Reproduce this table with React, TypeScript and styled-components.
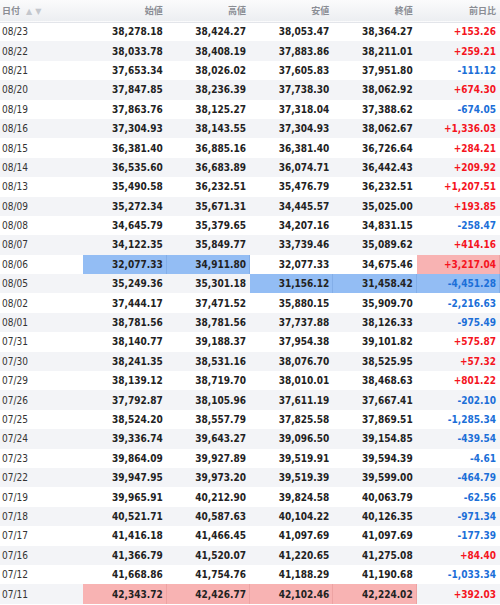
import React from "react";
import styled, { createGlobalStyle } from "styled-components";

const Global = createGlobalStyle`
  html, body { margin: 0; padding: 0; background: #fff; }
  body { font-family: "DejaVu Sans Condensed", "DejaVu Sans", "Noto Sans CJK JP", sans-serif; }
`;

type Hl = "blue" | "red" | undefined;

const Table = styled.table`
  width: 500px;
  border-collapse: collapse;
  table-layout: fixed;
`;

const HeadRow = styled.tr`
  height: 22px;
  background: linear-gradient(#fbfbfc, #eceef1);
  border-bottom: 1px solid #e3e5ea;
`;

const Th = styled.th<{ $left?: boolean }>`
  padding: ${(p) => (p.$left ? "0 0 0 2px" : "0 4px 0 0")};
  text-align: ${(p) => (p.$left ? "left" : "right")};
  font-family: "Noto Sans CJK JP", sans-serif;
  font-size: 9px;
  font-weight: 700;
  color: #8a8d94;
  white-space: nowrap;
  overflow: hidden;
`;

const Arrows = styled.span`
  margin-left: 6px;
  font-family: "DejaVu Sans", sans-serif;
  font-size: 8px;
  color: #c4c7cd;
  letter-spacing: 3px;
`;

const Row = styled.tr<{ $odd: boolean }>`
  height: 19.4px;
  background: ${(p) => (p.$odd ? "#f3f4f7" : "#ffffff")};
`;

const DateCell = styled.td`
  padding: 0 0 0 2px;
  font-size: 10px;
  color: #333;
  white-space: nowrap;
`;

const NumCell = styled.td<{ $hl: Hl; $color?: string }>`
  padding: 0 4px 0 0;
  text-align: right;
  font-size: 10px;
  font-weight: 700;
  white-space: nowrap;
  color: ${(p) => p.$color ?? "#222"};
  background: ${(p) =>
    p.$hl === "blue" ? "#93bdf4" : p.$hl === "red" ? "#f8b3b3" : "transparent"};
  box-shadow: ${(p) =>
    p.$hl === "blue"
      ? "inset -1px 0 0 #83aee8"
      : p.$hl === "red"
      ? "inset -1px 0 0 #eda3a3"
      : "none"};
`;

type Rec = [string, string, string, string, string, string];

const data: Rec[] = [
  ["08/23", "38,278.18", "38,424.27", "38,053.47", "38,364.27", "+153.26"],
  ["08/22", "38,033.78", "38,408.19", "37,883.86", "38,211.01", "+259.21"],
  ["08/21", "37,653.34", "38,026.02", "37,605.83", "37,951.80", "-111.12"],
  ["08/20", "37,847.85", "38,236.39", "37,738.30", "38,062.92", "+674.30"],
  ["08/19", "37,863.76", "38,125.27", "37,318.04", "37,388.62", "-674.05"],
  ["08/16", "37,304.93", "38,143.55", "37,304.93", "38,062.67", "+1,336.03"],
  ["08/15", "36,381.40", "36,885.16", "36,381.40", "36,726.64", "+284.21"],
  ["08/14", "36,535.60", "36,683.89", "36,074.71", "36,442.43", "+209.92"],
  ["08/13", "35,490.58", "36,232.51", "35,476.79", "36,232.51", "+1,207.51"],
  ["08/09", "35,272.34", "35,671.31", "34,445.57", "35,025.00", "+193.85"],
  ["08/08", "34,645.79", "35,379.65", "34,207.16", "34,831.15", "-258.47"],
  ["08/07", "34,122.35", "35,849.77", "33,739.46", "35,089.62", "+414.16"],
  ["08/06", "32,077.33", "34,911.80", "32,077.33", "34,675.46", "+3,217.04"],
  ["08/05", "35,249.36", "35,301.18", "31,156.12", "31,458.42", "-4,451.28"],
  ["08/02", "37,444.17", "37,471.52", "35,880.15", "35,909.70", "-2,216.63"],
  ["08/01", "38,781.56", "38,781.56", "37,737.88", "38,126.33", "-975.49"],
  ["07/31", "38,140.77", "39,188.37", "37,954.38", "39,101.82", "+575.87"],
  ["07/30", "38,241.35", "38,531.16", "38,076.70", "38,525.95", "+57.32"],
  ["07/29", "38,139.12", "38,719.70", "38,010.01", "38,468.63", "+801.22"],
  ["07/26", "37,792.87", "38,105.96", "37,611.19", "37,667.41", "-202.10"],
  ["07/25", "38,524.20", "38,557.79", "37,825.58", "37,869.51", "-1,285.34"],
  ["07/24", "39,336.74", "39,643.27", "39,096.50", "39,154.85", "-439.54"],
  ["07/23", "39,864.09", "39,927.89", "39,519.91", "39,594.39", "-4.61"],
  ["07/22", "39,947.95", "39,973.20", "39,519.39", "39,599.00", "-464.79"],
  ["07/19", "39,965.91", "40,212.90", "39,824.58", "40,063.79", "-62.56"],
  ["07/18", "40,521.71", "40,587.63", "40,104.22", "40,126.35", "-971.34"],
  ["07/17", "41,416.18", "41,466.45", "41,097.69", "41,097.69", "-177.39"],
  ["07/16", "41,366.79", "41,520.07", "41,220.65", "41,275.08", "+84.40"],
  ["07/12", "41,668.86", "41,754.76", "41,188.29", "41,190.68", "-1,033.34"],
  ["07/11", "42,343.72", "42,426.77", "42,102.46", "42,224.02", "+392.03"],
];

const highlights: Record<string, Hl[]> = {
  "08/06": [undefined, "blue", "blue", undefined, undefined, "red"],
  "08/05": [undefined, undefined, undefined, "blue", "blue", "blue"],
  "07/11": [undefined, "red", "red", "red", "red", undefined],
};

const changeColor = (v: string) => (v.startsWith("+") ? "#f5141e" : "#1b6fd8");

export default function App() {
  return (
    <>
      <Global />
      <Table>
        <thead>
          <HeadRow>
            <Th $left>
              日付<Arrows>▲▼</Arrows>
            </Th>
            <Th>始値</Th>
            <Th>高値</Th>
            <Th>安値</Th>
            <Th>終値</Th>
            <Th>前日比</Th>
          </HeadRow>
        </thead>
        <tbody>
          {data.map((r, i) => {
            const hl = highlights[r[0]] ?? [];
            return (
              <Row key={r[0]} $odd={i % 2 === 1}>
                <DateCell>{r[0]}</DateCell>
                {r.slice(1).map((v, j) => (
                  <NumCell
                    key={j}
                    $hl={hl[j + 1]}
                    $color={j === 4 ? changeColor(v) : undefined}
                  >
                    {v}
                  </NumCell>
                ))}
              </Row>
            );
          })}
        </tbody>
      </Table>
    </>
  );
}
